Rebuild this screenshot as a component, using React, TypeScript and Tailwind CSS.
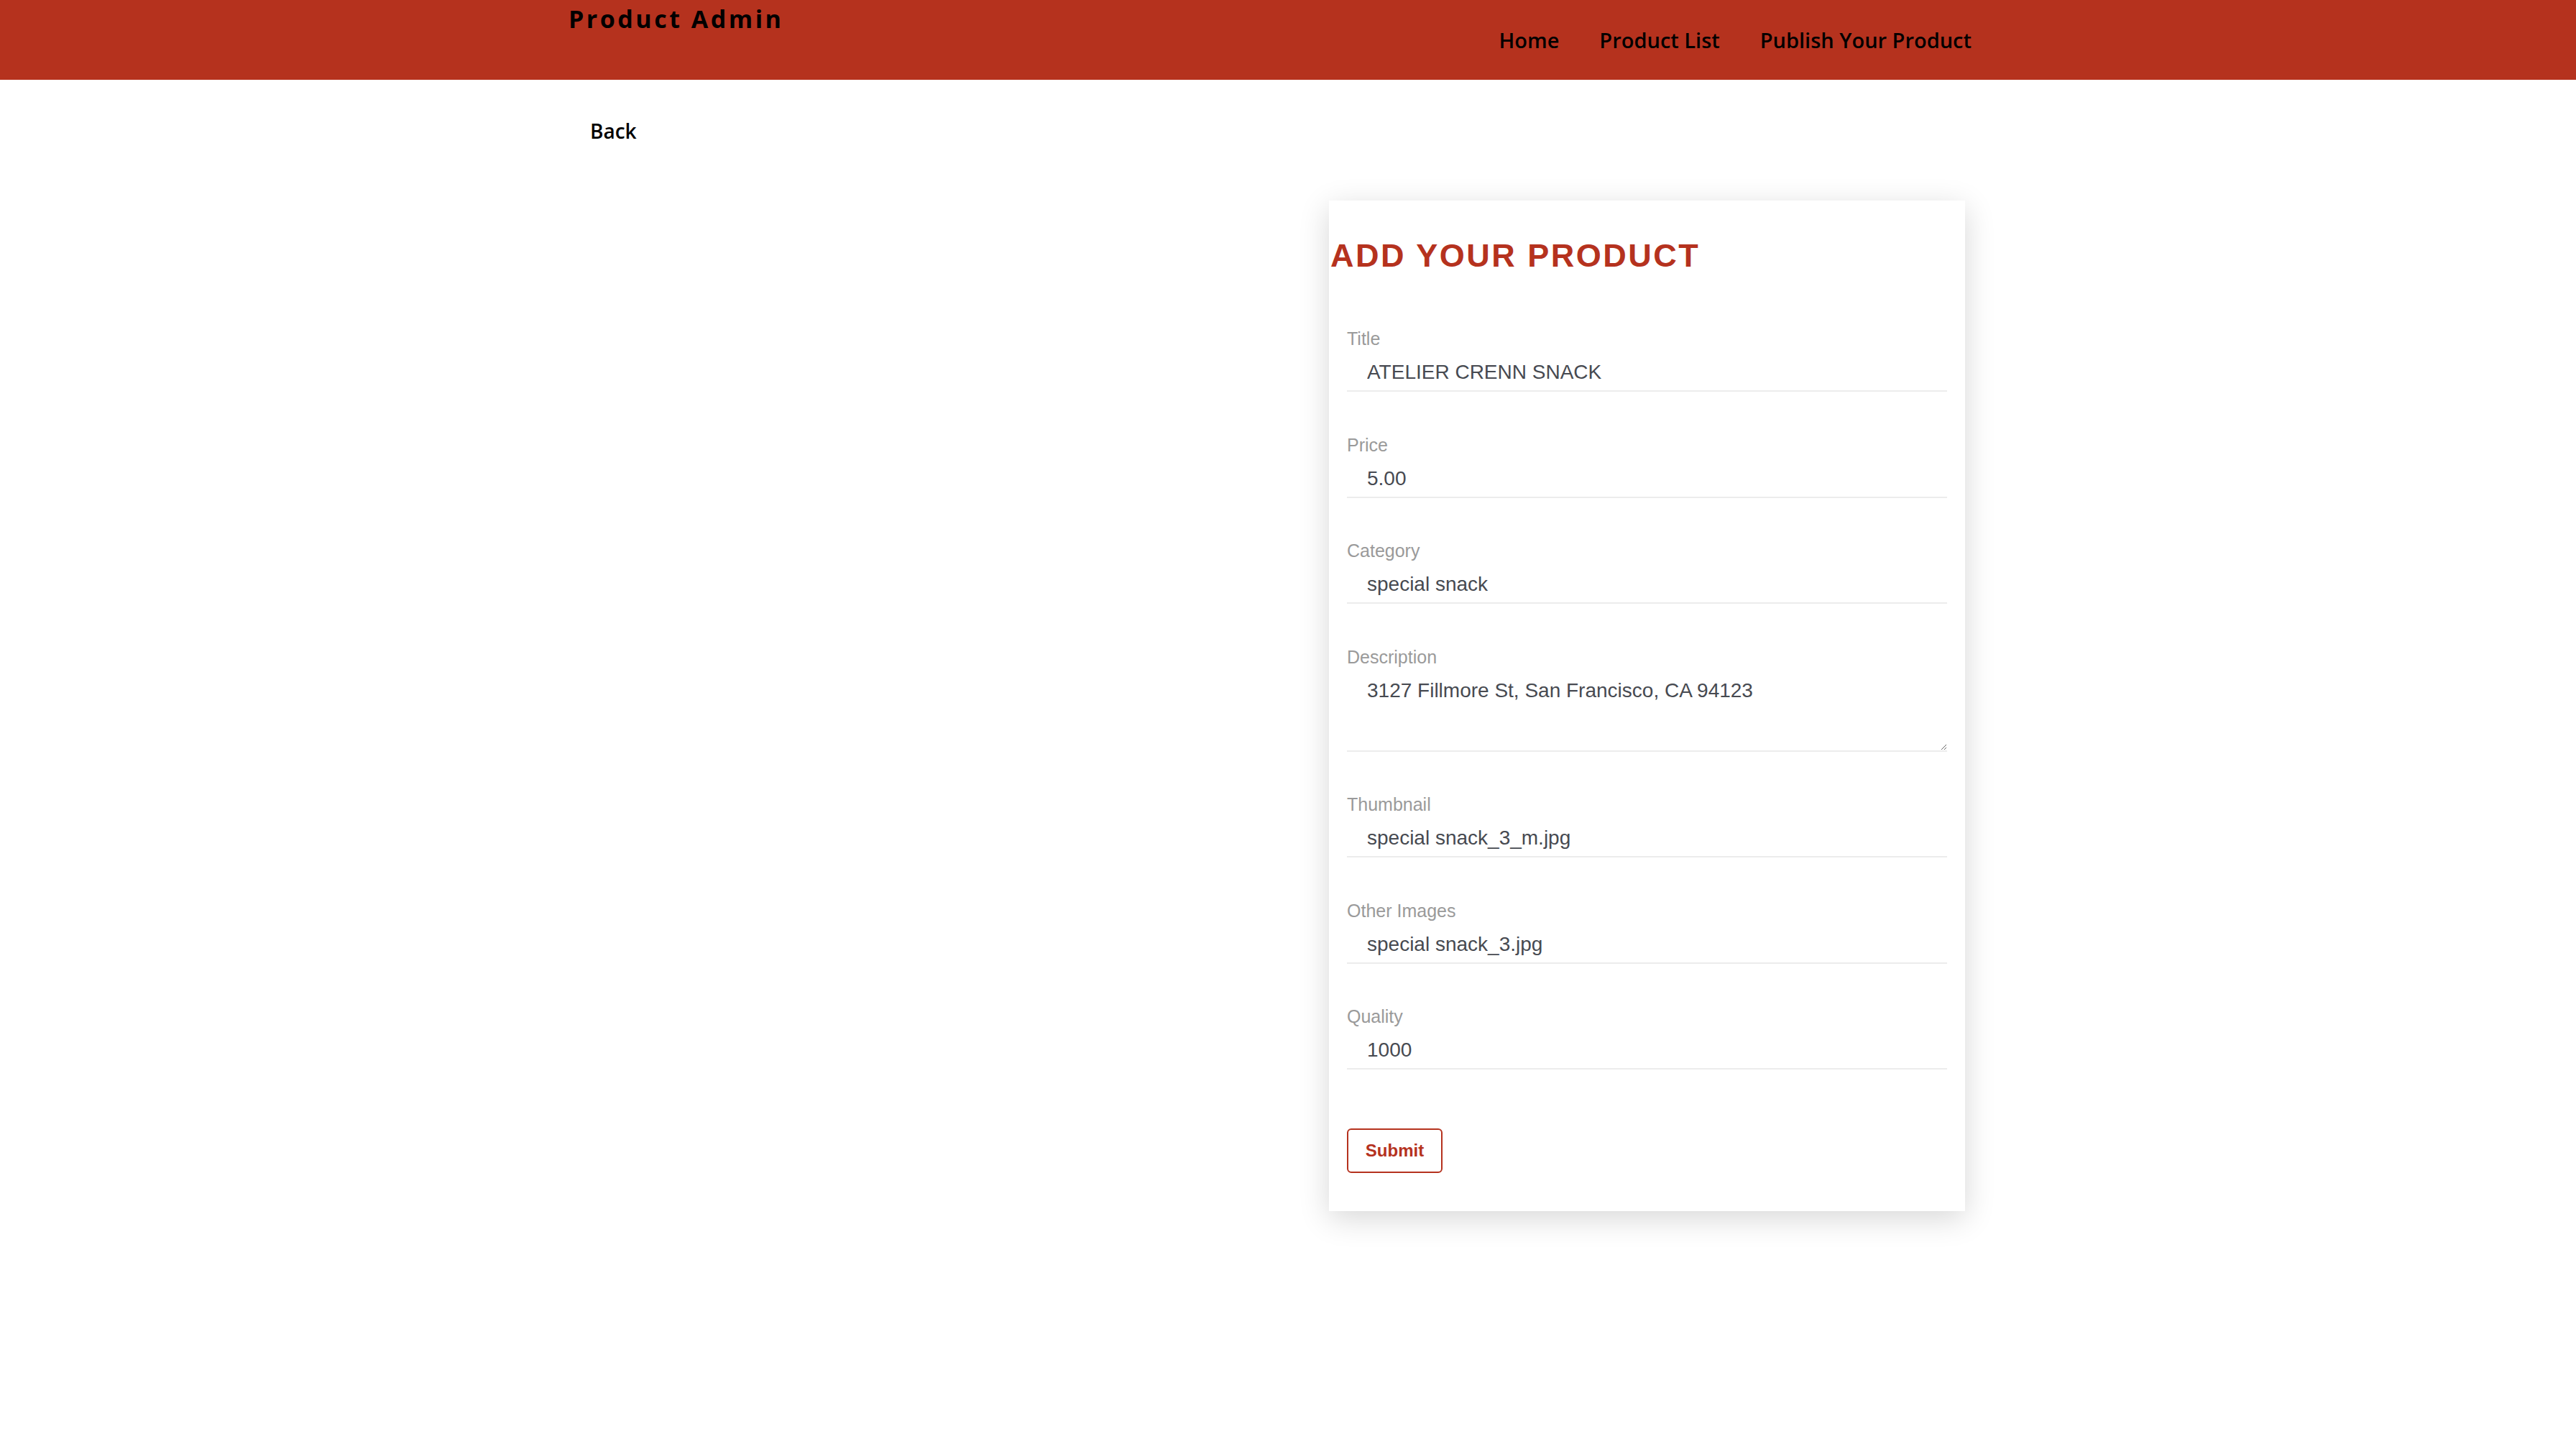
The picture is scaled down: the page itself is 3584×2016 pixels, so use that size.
import React from "react";

const fields: { label: string; value: string; multiline?: boolean }[] = [
  { label: "Title", value: "ATELIER CRENN SNACK" },
  { label: "Price", value: "5.00" },
  { label: "Category", value: "special snack" },
  { label: "Description", value: "3127 Fillmore St, San Francisco, CA 94123", multiline: true },
  { label: "Thumbnail", value: "special snack_3_m.jpg" },
  { label: "Other Images", value: "special snack_3.jpg" },
  { label: "Quality", value: "1000" },
];

export default function App() {
  return (
    <div className="min-h-[2016px] w-full bg-white">
      {/* top bar */}
      <header className="h-[111px] w-full bg-[#b5321e]">
        <div className="ml-[791px] flex w-[1952px] items-start justify-between">
          <div className="mt-[3px] font-['Open_Sans',sans-serif] text-[34px] font-bold leading-[46px] tracking-[3.5px] text-black">
            Product Admin
          </div>
          <nav className="flex h-[111px] items-center gap-[56px] font-['Open_Sans',sans-serif] text-[29px] font-semibold text-black">
            <a>Home</a>
            <a>Product List</a>
            <a>Publish Your Product</a>
          </nav>
        </div>
      </header>

      <div className="ml-[791px] w-[1952px]">
        <div className="ml-[30px] mt-[52px] font-['Open_Sans',sans-serif] text-[28px] font-semibold leading-[38px] text-black">
          Back
        </div>

        <div className="mt-[78px] flex justify-end pr-[9px]">
          <form className="w-[885px] bg-white pb-[53px] pt-[50px] shadow-[0_10px_40px_rgba(0,0,0,0.16)]">
            <h2 className="ml-[2px] font-['Liberation_Sans',Arial,sans-serif] text-[45px] font-bold leading-[54px] tracking-[2.5px] text-[#b5321e]">
              ADD YOUR PRODUCT
            </h2>

            <div className="mt-[73px] flex flex-col gap-[58.5px] px-[25px] font-['Liberation_Sans',Arial,sans-serif]">
              {fields.map((f) => (
                <div key={f.label} className="flex flex-col">
                  <label className="text-[25px] leading-[30px] text-[#9a9a9a]">{f.label}</label>
                  {f.multiline ? (
                    <textarea
                      defaultValue={f.value}
                      className="h-[117px] w-full border-b-2 border-[#ececec] pb-[9px] pl-[28px] pt-[16px] text-[28px] leading-[32px] text-[#474a51] outline-none"
                    />
                  ) : (
                    <input
                      defaultValue={f.value}
                      className="h-[59px] w-full border-b-2 border-[#ececec] pb-[9px] pl-[28px] pt-[16px] text-[28px] leading-[32px] text-[#474a51] outline-none"
                    />
                  )}
                </div>
              ))}
            </div>

            <div className="mt-[82px] px-[25px]">
              <button
                type="button"
                className="h-[62px] w-[133px] rounded-[6px] border-2 border-[#b5321e] bg-white font-['Liberation_Sans',Arial,sans-serif] text-[24px] font-bold text-[#b5321e]"
              >
                Submit
              </button>
            </div>
          </form>
        </div>
      </div>
    </div>
  );
}
